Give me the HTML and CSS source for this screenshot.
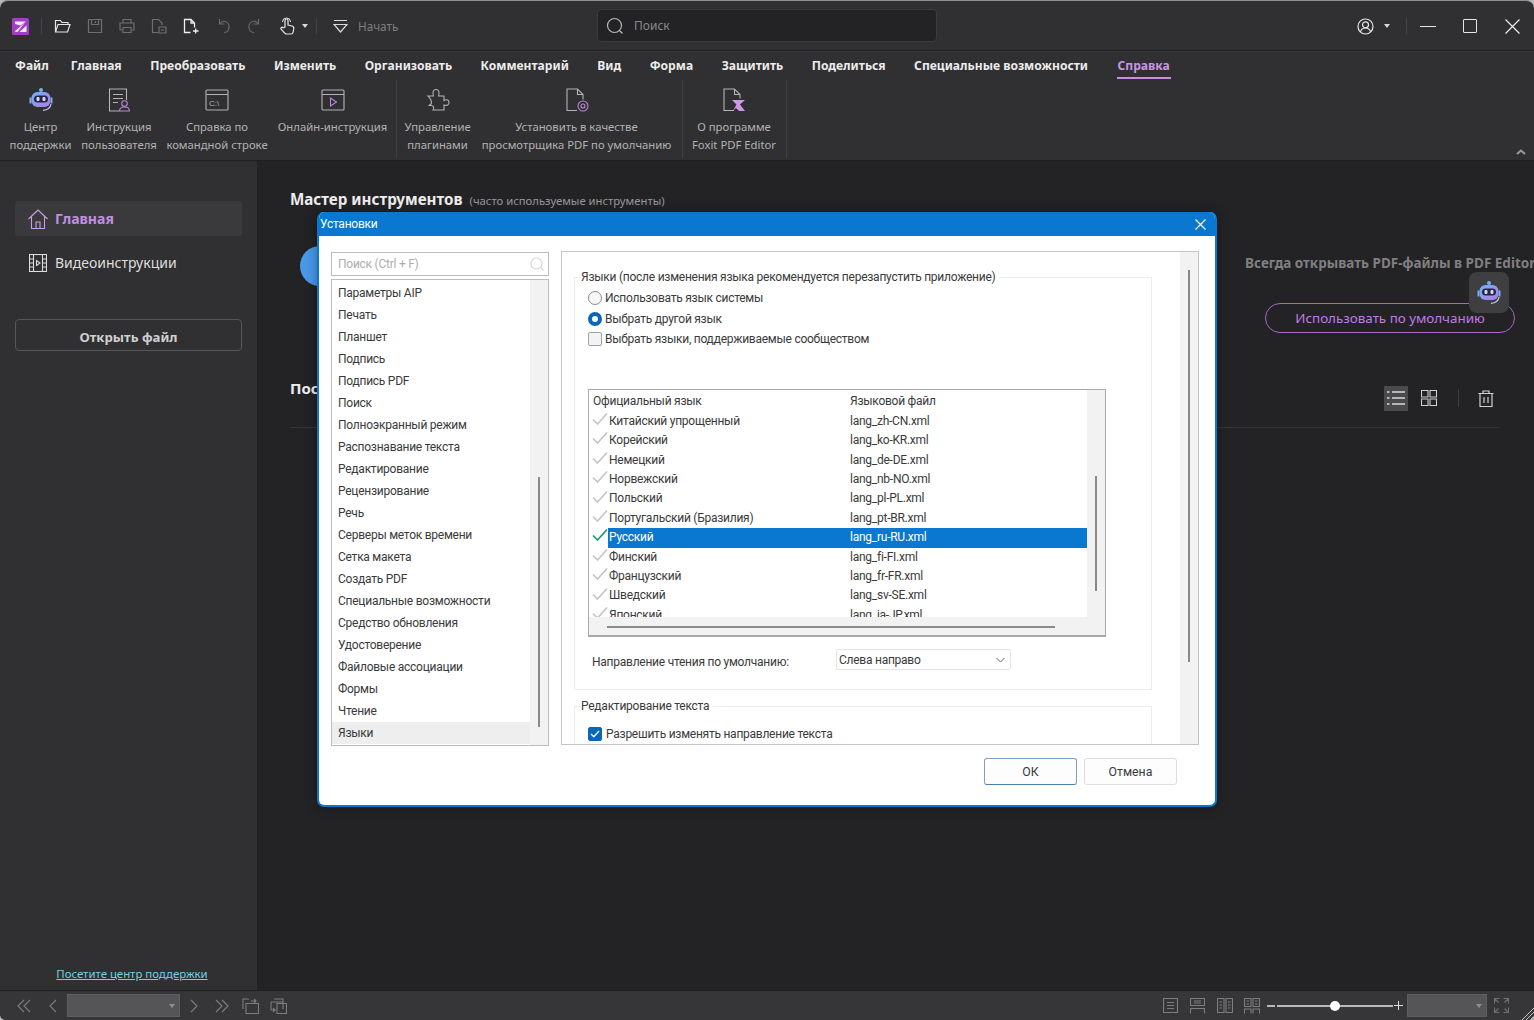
FILE: index.html
```html
<!DOCTYPE html>
<html lang="ru">
<head>
    <meta charset="UTF-8">
    <meta name="viewport" content="width=device-width, initial-scale=1.0">
    <title>Foxit PDF Editor</title>
    <link rel="stylesheet" href="styles.css">
</head>
<body>
<svg class="defs" width="0" height="0">
    <defs>
        <linearGradient id="robo" x1="0" y1="0" x2="1" y2="1">
            <stop offset="0" stop-color="#6fb4f5"/>
            <stop offset="1" stop-color="#b07ae8"/>
        </linearGradient>
        <symbol id="robot" viewBox="0 0 26 26">
            <circle cx="13" cy="3" r="2" fill="#6fb4f5"/>
            <path d="M1.500 10.500h2v6h-2zM22.500 10.500h2v6h-2z" fill="#6fb4f5"/>
            <rect x="3.500" y="5" width="19" height="15" rx="6" fill="url(#robo)"/>
            <rect x="6" y="8.500" width="14" height="7" rx="3.500" fill="#2a2440"/>
            <rect x="8.500" y="10" width="3" height="4" rx="1" fill="#cfd9ff"/>
            <rect x="14.500" y="10" width="3" height="4" rx="1" fill="#cfd9ff"/>
            <path d="M23 17c-.5 4-4 6-8 6.300" fill="none" stroke="#b9c3e8" stroke-width="1.300"/>
        </symbol>
        <symbol id="tick" viewBox="0 0 16 14">
            <path d="M1 7.500l4.500 4.500L15 1.500" fill="none" stroke="currentColor" stroke-width="1.700"/>
        </symbol>
    </defs>
</svg>

<div class="app">
    <header class="titlebar">
        <div class="qa">
            <svg class="logo" width="17" height="17" viewBox="0 0 17 17"><rect width="17" height="17" rx="1.500" fill="#a23fc0"/><path d="M3 3.500h11L8.500 7.500 3 6zM14.500 14H7.500l7-6.500zM2.500 13.500L13 4.500 5.500 14z" fill="#f4e6fa"/></svg>
            <span class="qa-sep"></span>
            <svg class="ic" width="17" height="16" viewBox="0 0 17 16" fill="none" stroke="#e6e6e6" stroke-width="1.200"><path d="M1.500 14V2.500h5l1.500 2h6v2"/><path d="M1.500 14l2.500-7.500h12L13.500 14z"/></svg>
            <svg class="ic" width="16" height="16" viewBox="0 0 16 16" fill="none" stroke="#6f6e70" stroke-width="1.200"><path d="M1.500 1.500h13v13h-13z"/><path d="M4.500 1.500v5h7v-5M8.500 3v2"/></svg>
            <svg class="ic" width="16" height="16" viewBox="0 0 16 16" fill="none" stroke="#6f6e70" stroke-width="1.200"><path d="M4 5V1.500h8V5M4 12H1V5h14v7h-3"/><path d="M4 9.500h8v5H4z"/></svg>
            <svg class="ic" width="16" height="16" viewBox="0 0 16 16" fill="none" stroke="#6f6e70" stroke-width="1.200"><path d="M7 14.500H1.500v-13h6l3.500 3.500v2"/><path d="M8 9h7v6H8zM10 12h3"/></svg>
            <svg class="ic" width="16" height="16" viewBox="0 0 16 16" fill="none" stroke="#efefef" stroke-width="1.300"><path d="M7.500 14.500h-6v-13h6.500l3.500 3.500v4.500M8 1.500V5h3.500"/><path d="M10 13h5.500M12.700 10.500v5"/></svg>
            <svg class="ic" width="16" height="16" viewBox="0 0 16 16" fill="none" stroke="#6a696b" stroke-width="1.200"><path d="M4.500 1v5h5M4.500 6C6 4 8 3 10 3.500c3 .7 4.500 3.500 4 6.500-.5 2.500-2.500 4.500-5 4.500"/></svg>
            <svg class="ic" width="16" height="16" viewBox="0 0 16 16" fill="none" stroke="#6a696b" stroke-width="1.200"><path d="M11.500 1v5h-5M11.500 6C10 4 8 3 6 3.500c-3 .7-4.500 3.500-4 6.500.5 2.500 2.500 4.500 5 4.500"/></svg>
            <svg class="ic" width="16" height="18" viewBox="0 0 16 18" fill="none" stroke="#e6e6e6" stroke-width="1.200"><path d="M6 10V3.500a1.500 1.500 0 013 0V8l4 1c1.300.4 2 1.300 1.800 2.500l-.6 3.500c-.2 1.200-1 2-2.300 2H7.500c-1 0-1.700-.5-2.300-1.300L2 12c-.7-1.300.9-2.400 2-1.300z"/><path d="M3.500 5a4 4 0 018 0" stroke-width="1"/></svg>
            <span class="caret"></span>
            <span class="qa-sep qa-sep-2"></span>
            <svg class="ic-start" width="15" height="15" viewBox="0 0 15 15" fill="none" stroke="#d8d8d8" stroke-width="1.200"><path d="M1 1.500h13M1 5.500h13L7.500 13z"/></svg>
            <span class="start-label">Начать</span>
        </div>
        <div class="search">
            <svg width="18" height="18" viewBox="0 0 18 18" fill="none" stroke="#b9b9b9" stroke-width="1.200"><circle cx="8.500" cy="8.500" r="7"/><path d="M13.500 13.500l3 3"/></svg>
            <span>Поиск</span>
        </div>
        <div class="win-btns">
            <svg width="17" height="17" viewBox="0 0 17 17" fill="none" stroke="#e6e6e6" stroke-width="1.200"><circle cx="8.500" cy="8.500" r="7.500"/><circle cx="8.500" cy="6.800" r="3"/><path d="M3.500 14c.5-3 2.500-4 5-4s4.500 1 5 4"/></svg>
            <span class="caret caret-user"></span>
            <span class="qa-sep qa-sep-3"></span>
            <span class="win-min"></span>
            <span class="win-max"></span>
            <svg class="win-close" width="15" height="15" viewBox="0 0 15 15" stroke="#efefef" stroke-width="1.200"><path d="M.5.500l14 14M14.500.500l-14 14"/></svg>
        </div>
    </header>

    <nav class="tabs">
        <a class="tab tab-first">Файл</a>
        <a class="tab">Главная</a>
        <a class="tab">Преобразовать</a>
        <a class="tab">Изменить</a>
        <a class="tab">Организовать</a>
        <a class="tab">Комментарий</a>
        <a class="tab">Вид</a>
        <a class="tab">Форма</a>
        <a class="tab">Защитить</a>
        <a class="tab">Поделиться</a>
        <a class="tab">Специальные возможности</a>
        <a class="tab tab-active">Справка</a>
    </nav>

    <section class="ribbon">
        <div class="rb-group">
            <div class="rb-item rb-w63">
                <svg class="rb-robot" width="26" height="26"><use href="#robot"/></svg>
                <span>Центр<br>поддержки</span>
            </div>
            <div class="rb-item rb-w74">
                <svg width="24" height="24" viewBox="0 0 24 24" fill="none" stroke="#b4b4b4" stroke-width="1.100"><path d="M12 23H2.500V1h17v11"/><path d="M6 6.500h10M6 10.500h10M6 14.500h5"/><circle cx="17.500" cy="15.500" r="2.800" stroke="#b58ad8"/><path d="M12.500 23c0-3 2-4 5-4s5 1 5 4z" stroke="#b58ad8"/></svg>
                <span>Инструкция<br>пользователя</span>
            </div>
            <div class="rb-item rb-w102">
                <svg width="24" height="24" viewBox="0 0 24 24" fill="none" stroke="#b4b4b4" stroke-width="1.100"><rect x="1" y="2" width="22" height="20" rx="1"/><path d="M1 6.500h22"/><text x="4" y="17.500" font-size="8" fill="#b4b4b4" stroke="none" font-family="Liberation Sans">C:\</text></svg>
                <span>Справка по<br>командной строке</span>
            </div>
            <div class="rb-item rb-w109">
                <svg width="24" height="24" viewBox="0 0 24 24" fill="none" stroke="#b4b4b4" stroke-width="1.100"><rect x="1" y="2" width="22" height="20" rx="1"/><path d="M1 6.500h22"/><path d="M9.500 10v8l6-4z" stroke="#b58ad8"/></svg>
                <span>Онлайн-инструкция</span>
            </div>
        </div>
        <div class="rb-group">
            <div class="rb-item rb-w65">
                <svg width="24" height="24" viewBox="0 0 24 24" fill="none" stroke="#b4b4b4" stroke-width="1.100"><path d="M2 8h5.500C6 4 7.500 1.500 10 1.500S14 4 12.500 8H18v4.500c3-1.500 5-.5 5 2s-2 3.500-5 2.500v5H7c1.500-2.500.5-4.500-2-4.500H2.500c2-.5 3-1.500 3-3S4 9.500 2 8z"/></svg>
                <span>Управление<br>плагинами</span>
            </div>
            <div class="rb-item rb-w193">
                <svg width="24" height="24" viewBox="0 0 24 24" fill="none" stroke="#b4b4b4" stroke-width="1.100"><path d="M12 22.500H2V1h10.500L18 6.500v5M12.500 1v5.500H18"/><circle cx="18" cy="18" r="5" stroke="#b58ad8"/><circle cx="18" cy="18" r="2" stroke="#b58ad8"/></svg>
                <span>Установить в качестве<br>просмотрщика PDF по умолчанию</span>
            </div>
        </div>
        <div class="rb-group">
            <div class="rb-item rb-w86">
                <svg width="24" height="24" viewBox="0 0 24 24" fill="none" stroke="#b4b4b4" stroke-width="1.100"><path d="M12 22.500H2V1h10.500L18 6.500v4M12.500 1v5.500H18"/><path d="M10 12h13l-5 4.500 5 6.500h-6l-3-3-3 2.500 3.500-6z" fill="#cf97e6" stroke="none"/></svg>
                <span>О программе<br>Foxit PDF Editor</span>
            </div>
        </div>
        <svg class="rb-collapse" width="10" height="6" viewBox="0 0 10 6" fill="none" stroke="#9a9a9a" stroke-width="2"><path d="M1 5l4-3.500L9 5"/></svg>
    </section>

    <div class="workspace">
        <aside class="sidebar">
            <div class="side-item side-active">
                <svg width="20" height="20" viewBox="0 0 20 20" fill="none" stroke="#c9a0e6" stroke-width="1.100"><path d="M.5 10L10 1l9.500 9M3.500 8v11.500h13V8"/><path d="M8 19.500V13h4v6.500"/></svg>
                <span>Главная</span>
            </div>
            <div class="side-item">
                <svg width="18" height="18" viewBox="0 0 18 18" fill="none" stroke="#dcdcdc" stroke-width="1.100"><rect x=".5" y=".5" width="17" height="17"/><path d="M4.500.5v17M13.500.5v17M.5 5h4M.5 9h4M.5 13h4M13.500 5h4M13.500 9h4M13.500 13h4"/><path d="M7.500 6.500v5l3.500-2.500z"/></svg>
                <span>Видеоинструкции</span>
            </div>
            <button class="open-file">Открыть файл</button>
            <a class="help-link">Посетите центр поддержки</a>
        </aside>

        <main class="main">
            <h2 class="main-title">Мастер инструментов <small>(часто используемые инструменты)</small></h2>
            <div class="promo">
                <span class="promo-circle"></span>
                <div class="promo-right">
                    <p class="promo-text">Всегда открывать PDF-файлы в PDF Editor</p>
                    <button class="promo-btn">Использовать по умолчанию</button>
                </div>
            </div>
            <div class="recent-head">
                <span class="recent-title">Последние</span>
                <span class="view-btn view-btn-on">
                    <svg width="18" height="16" viewBox="0 0 18 16" fill="none" stroke="#d9d9d9" stroke-width="1.400"><path d="M5 2h13M5 8h13M5 14h13M0 2h2.500M0 8h2.500M0 14h2.500"/></svg>
                </span>
                <span class="view-btn">
                    <svg width="16" height="16" viewBox="0 0 16 16" fill="none" stroke="#d0d0d0" stroke-width="1.100"><path d="M.5.500h6.500v6.500H.5zM9 .5h6.500v6.500H9zM.5 9h6.500v6.500H.5zM9 9h6.500v6.500H9z"/></svg>
                </span>
                <span class="view-sep"></span>
                <span class="view-btn">
                    <svg width="16" height="17" viewBox="0 0 16 17" fill="none" stroke="#d0d0d0" stroke-width="1.200"><path d="M.5 3.500h15M5 3.500V1h6v2.500M2 3.500v13h12v-13M6 7v6M10 7v6"/></svg>
                </span>
            </div>
        </main>

        <div class="robot-float">
            <svg width="26" height="26"><use href="#robot"/></svg>
        </div>

        <div class="dialog">
            <div class="dlg-title">
                <span>Установки</span>
                <svg width="11" height="11" viewBox="0 0 11 11" stroke="#fff" stroke-width="1.100"><path d="M.5.500l10 10M10.500.500l-10 10"/></svg>
            </div>
            <div class="dlg-body">
                <div class="dlg-left">
                    <div class="dlg-search">
                        <span>Поиск (Ctrl + F)</span>
                        <svg width="14" height="14" viewBox="0 0 14 14" fill="none" stroke="#d4d4d4" stroke-width="1.100"><circle cx="6.500" cy="6.500" r="5.500"/><path d="M10.500 10.500l3 3"/></svg>
                    </div>
                    <div class="cat-box">
                        <ul class="cat-list">
                            <li>Параметры AIP</li>
                            <li>Печать</li>
                            <li>Планшет</li>
                            <li>Подпись</li>
                            <li>Подпись PDF</li>
                            <li>Поиск</li>
                            <li>Полноэкранный режим</li>
                            <li>Распознавание текста</li>
                            <li>Редактирование</li>
                            <li>Рецензирование</li>
                            <li>Речь</li>
                            <li>Серверы меток времени</li>
                            <li>Сетка макета</li>
                            <li>Создать PDF</li>
                            <li>Специальные возможности</li>
                            <li>Средство обновления</li>
                            <li>Удостоверение</li>
                            <li>Файловые ассоциации</li>
                            <li>Формы</li>
                            <li>Чтение</li>
                            <li class="cat-on">Языки</li>
                        </ul>
                        <div class="vscroll cat-scroll"><i></i></div>
                    </div>
                </div>

                <div class="dlg-panel">
                    <div class="panel-content">
                        <fieldset class="fset fset-lang">
                            <legend>Языки (после изменения языка рекомендуется перезапустить приложение)</legend>
                            <label class="opt"><span class="radio"></span>Использовать язык системы</label>
                            <label class="opt"><span class="radio radio-on"></span>Выбрать другой язык</label>
                            <label class="opt"><span class="check"></span>Выбрать языки, поддерживаемые сообществом</label>

                            <div class="lang-box">
                                <div class="lang-list">
                                    <div class="lang-row lang-head"><span>Официальный язык</span><span>Языковой файл</span></div>
                                    <div class="lang-row"><svg width="16" height="14"><use href="#tick"/></svg><span>Китайский упрощенный</span><span>lang_zh-CN.xml</span></div>
                                    <div class="lang-row"><svg width="16" height="14"><use href="#tick"/></svg><span>Корейский</span><span>lang_ko-KR.xml</span></div>
                                    <div class="lang-row"><svg width="16" height="14"><use href="#tick"/></svg><span>Немецкий</span><span>lang_de-DE.xml</span></div>
                                    <div class="lang-row"><svg width="16" height="14"><use href="#tick"/></svg><span>Норвежский</span><span>lang_nb-NO.xml</span></div>
                                    <div class="lang-row"><svg width="16" height="14"><use href="#tick"/></svg><span>Польский</span><span>lang_pl-PL.xml</span></div>
                                    <div class="lang-row"><svg width="16" height="14"><use href="#tick"/></svg><span>Португальский (Бразилия)</span><span>lang_pt-BR.xml</span></div>
                                    <div class="lang-row lang-on"><svg width="16" height="14"><use href="#tick"/></svg><span>Русский</span><span>lang_ru-RU.xml</span></div>
                                    <div class="lang-row"><svg width="16" height="14"><use href="#tick"/></svg><span>Финский</span><span>lang_fi-FI.xml</span></div>
                                    <div class="lang-row"><svg width="16" height="14"><use href="#tick"/></svg><span>Французский</span><span>lang_fr-FR.xml</span></div>
                                    <div class="lang-row"><svg width="16" height="14"><use href="#tick"/></svg><span>Шведский</span><span>lang_sv-SE.xml</span></div>
                                    <div class="lang-row"><svg width="16" height="14"><use href="#tick"/></svg><span>Японский</span><span>lang_ja-JP.xml</span></div>
                                </div>
                                <div class="vscroll lang-vs"><i></i></div>
                                <div class="hscroll"><i></i></div>
                                <div class="corner"></div>
                            </div>

                            <div class="dir-row">
                                <span>Направление чтения по умолчанию:</span>
                                <div class="select">
                                    <span>Слева направо</span>
                                    <svg width="9" height="6" viewBox="0 0 9 6" fill="none" stroke="#666" stroke-width="1"><path d="M.5 1l4 4 4-4"/></svg>
                                </div>
                            </div>
                        </fieldset>

                        <fieldset class="fset fset-edit">
                            <legend>Редактирование текста</legend>
                            <label class="opt"><span class="check check-on"><svg width="10" height="8" viewBox="0 0 10 8" fill="none" stroke="#fff" stroke-width="1.300"><path d="M1 4l2.800 2.800L9 1"/></svg></span>Разрешить изменять направление текста</label>
                        </fieldset>
                    </div>
                    <div class="vscroll panel-vs"><i></i></div>
                </div>
            </div>
            <div class="dlg-foot">
                <button class="btn btn-def">ОК</button>
                <button class="btn">Отмена</button>
            </div>
        </div>
    </div>

    <footer class="statusbar">
        <span class="st-slot"><svg width="14" height="14" viewBox="0 0 14 14" fill="none" stroke="#7d7c7e" stroke-width="1.100"><path d="M7 1L1 7l6 6M13 1L7 7l6 6"/></svg></span>
        <span class="st-slot"><svg width="9" height="14" viewBox="0 0 9 14" fill="none" stroke="#7d7c7e" stroke-width="1.100"><path d="M8 1L2 7l6 6"/></svg></span>
        <div class="st-combo st-combo-page"><span class="caret caret-dim"></span></div>
        <span class="st-slot"><svg width="9" height="14" viewBox="0 0 9 14" fill="none" stroke="#7d7c7e" stroke-width="1.100"><path d="M1 1l6 6-6 6"/></svg></span>
        <span class="st-slot"><svg width="14" height="14" viewBox="0 0 14 14" fill="none" stroke="#7d7c7e" stroke-width="1.100"><path d="M1 1l6 6-6 6M7 1l6 6-6 6"/></svg></span>
        <span class="st-slot"><svg width="17" height="16" viewBox="0 0 17 16" fill="none" stroke="#7d7c7e" stroke-width="1.100"><path d="M4 5.500h12.500v10H4zM1 11V1h6M9 3h5M12 1l2 2-2 2"/></svg></span>
        <span class="st-slot"><svg width="17" height="16" viewBox="0 0 17 16" fill="none" stroke="#7d7c7e" stroke-width="1.100"><path d="M4 1h9v10M1 4h12M7 5.500h9.500v10H7zM1 4v8h5M3 10l2 2-2 2"/></svg></span>

        <div class="st-right">
            <span class="st-slot st-slot-r"><svg width="15" height="15" viewBox="0 0 15 15" fill="none" stroke="#7d7c7e" stroke-width="1.100"><path d="M.5.500h14v14H.5zM4 4.500h7M4 7.500h7M4 10.500h7"/></svg></span>
            <span class="st-slot st-slot-r"><svg width="15" height="16" viewBox="0 0 15 16" fill="none" stroke="#7d7c7e" stroke-width="1.100"><path d="M.5.500h14v7H.5zM4 3h7M4 5h7M.5 15.500v-5h14v5"/></svg></span>
            <span class="st-slot st-slot-r"><svg width="16" height="15" viewBox="0 0 16 15" fill="none" stroke="#7d7c7e" stroke-width="1.100"><path d="M.5.500h6.500v14H.5zM9 .5h6.500v14H9zM2.500 4h2.500M2.500 7h2.500M2.500 10h2.500M11 4h2.500M11 7h2.500M11 10h2.500"/></svg></span>
            <span class="st-slot st-slot-r"><svg width="16" height="16" viewBox="0 0 16 16" fill="none" stroke="#7d7c7e" stroke-width="1.100"><path d="M.5.500h6.500v8H.5zM9 .5h6.500v8H9zM.5 15.500v-4.500h6.500v4.500M9 15.500v-4.500h6.500v4.500M2.500 3h2.500M2.500 6h2.500M11 3h2.500M11 6h2.500"/></svg></span>
            <div class="zoom">
                <span class="zoom-minus"></span>
                <div class="zoom-track"><span class="zoom-knob"></span></div>
                <span class="zoom-plus"></span>
            </div>
            <div class="st-combo st-combo-zoom"><span class="caret caret-dim"></span></div>
            <span class="st-slot"><svg width="15" height="15" viewBox="0 0 15 15" fill="none" stroke="#6f6e70" stroke-width="1.200"><path d="M5.500.5h-5v5M9.500.5h5v5M5.500 14.500h-5v-5M9.500 14.500h5v-5M.5.500l4 4M14.500.500l-4 4M.5 14.500l4-4M14.500 14.500l-4-4"/></svg></span>
        </div>
        <svg class="grip" width="12" height="12" viewBox="0 0 12 12" stroke="#c8c8c8" stroke-width="1"><path d="M12 0L0 12M12 4l-8 8M12 8l-4 4"/></svg>
    </footer>
</div>
</body>
</html>
```

FILE: styles.css
```css
* {
    margin: 0;
    padding: 0;
    box-sizing: border-box;
}
html, body {
    height: 100%;
    overflow: hidden;
    background: #b8b8b8;
}
body {
    font-family: "Noto Sans", "Open Sans", sans-serif;
}
.defs {
    position: absolute;
}
button {
    font-family: inherit;
}
.app {
    height: 100vh;
    display: flex;
    flex-direction: column;
    background: #302f31;
    border-top: 1px solid #8f8f8f;
    border-radius: 8px 8px 6px 6px;
    overflow: hidden;
}

/* title bar */
.titlebar {
    flex: 0 0 50px;
    display: grid;
    grid-template-columns: 1fr 340px 1fr;
    align-items: center;
    border-bottom: 1px solid #1f1e20;
    padding-top: 1px;
}
.qa {
    display: flex;
    align-items: center;
    padding-left: 12px;
}
.logo {
    margin-right: 12px;
}
.qa .ic {
    margin-left: 16px;
    flex: none;
}
.qa .qa-sep + .ic {
    margin-left: 12px;
}
.qa-sep {
    width: 1px;
    height: 16px;
    background: #454446;
}
.qa-sep-2 {
    margin-left: 8px;
}
.qa-sep-3 {
    margin-left: 16px;
    margin-right: 13px;
}
.caret {
    width: 0;
    height: 0;
    border-left: 3.500px solid transparent;
    border-right: 3.500px solid transparent;
    border-top: 4px solid #d8d8d8;
    margin-left: 7px;
}
.ic-start {
    margin-left: 16px;
}
.start-label {
    margin-left: 10px;
    font-size: 11.700px;
    color: #7e7d7f;
}
.search {
    height: 33px;
    margin-top: -1px;
    display: flex;
    align-items: center;
    gap: 10px;
    padding-left: 8px;
    background: #232224;
    border: 1px solid #3c3b3d;
    border-radius: 4px;
    font-size: 12px;
    color: #8b8a8c;
}
.win-btns {
    display: flex;
    align-items: center;
    justify-content: flex-end;
    padding-right: 14px;
}
.caret-user {
    margin-left: 10px;
}
.win-min {
    width: 16px;
    height: 1px;
    background: #e6e6e6;
}
.win-max {
    width: 14px;
    height: 14px;
    margin-left: 27px;
    border: 1px solid #e6e6e6;
    border-radius: 1px;
}
.win-close {
    margin-left: 28px;
}

/* tabs + ribbon */
.tabs {
    flex: 0 0 29px;
    display: flex;
    gap: 28.500px;
    padding: 5px 0 0 15px;
    border-top: 1px solid #38373a;
}
.tab {
    font-size: 12.100px;
    font-weight: 700;
    color: #ececec;
    line-height: 18px;
    height: 22px;
}
.tab-first {
    margin-right: -6.500px;
}
.tab-active {
    color: #c796e0;
    border-bottom: 2px solid #c98de2;
    padding: 0 1px;
}
.ribbon {
    flex: 0 0 81px;
    display: flex;
    border-bottom: 1px solid #1f1e20;
    position: relative;
}
.rb-group {
    display: flex;
    gap: 10px;
    padding: 0 9px 3px;
    height: 78px;
    border-right: 1px solid #3f3e40;
}
.rb-group + .rb-group {
    padding-left: 8px;
}
.rb-item {
    display: flex;
    flex-direction: column;
    align-items: center;
    text-align: center;
    font-size: 11.300px;
    line-height: 18px;
    color: #b3b2b4;
    white-space: nowrap;
    padding-top: 8px;
}
.rb-w63 { width: 63px; }
.rb-w65 { width: 65px; }
.rb-w74 { width: 74px; }
.rb-w86 { width: 86px; }
.rb-w102 { width: 102px; }
.rb-w109 { width: 109px; }
.rb-w193 { width: 193px; }
.rb-item svg {
    flex: none;
    margin-bottom: 6px;
}
.rb-item .rb-robot {
    margin: -1px 0 5px;
}
.rb-collapse {
    position: absolute;
    right: 8px;
    bottom: 5px;
}

/* workspace */
.workspace {
    flex: 1;
    display: flex;
    position: relative;
    min-height: 0;
    background: #232224;
}
.sidebar {
    flex: 0 0 257px;
    display: flex;
    flex-direction: column;
    padding: 40px 15px 9px;
    background: #302f31;
    border-right: 1px solid #212022;
}
.side-item {
    width: 227px;
    height: 35px;
    display: flex;
    align-items: center;
    gap: 8px;
    padding-left: 14px;
    font-size: 14px;
    color: #dedede;
    margin-bottom: 9px;
}
.side-active {
    gap: 7px;
    padding-left: 13px;
    background: #3a393b;
    border-radius: 3px;
    color: #c08fe0;
    font-weight: 700;
}
.open-file {
    width: 227px;
    height: 32px;
    margin-top: 30px;
    padding-top: 3px;
    background: transparent;
    border: 1px solid #565557;
    border-radius: 4px;
    color: #d0d0d0;
    font-size: 13.200px;
    font-weight: 700;
}
.help-link {
    margin-top: auto;
    padding-left: 7px;
    text-align: center;
    font-size: 11.400px;
    color: #72cfe6;
    text-decoration: underline;
}
.main {
    flex: 1;
    min-width: 0;
    overflow: hidden;
    padding: 28px 34px 0 32px;
}
.main-title {
    font-size: 15.200px;
    font-weight: 700;
    color: #ededed;
    line-height: 21px;
}
.main-title small {
    font-size: 11.300px;
    font-weight: 400;
    color: #9a999b;
    margin-left: 3px;
}
.promo {
    display: flex;
    justify-content: space-between;
    height: 168px;
}
.promo-circle {
    flex: none;
    width: 40px;
    height: 40px;
    margin: 35px 0 0 10px;
    border-radius: 50%;
    background: #4a98e8;
}
.promo-right {
    width: 255px;
    padding-top: 42px;
}
.promo-text {
    font-size: 13.500px;
    font-weight: 700;
    color: #807f81;
    line-height: 20px;
    white-space: nowrap;
}
.promo-btn {
    display: block;
    width: 250px;
    height: 30px;
    margin: 30px 0 0 20px;
    background: transparent;
    border: 1px solid #a868c8;
    border-radius: 15px;
    color: #c27ae8;
    font-size: 13.400px;
}
.recent-head {
    display: flex;
    align-items: center;
    height: 49px;
    border-bottom: 1px solid #353436;
    padding-bottom: 10px;
}
.recent-title {
    font-size: 15px;
    font-weight: 700;
    color: #ededed;
    margin-right: auto;
    margin-top: -20px;
}
.view-btn {
    width: 24px;
    height: 25px;
    display: flex;
    align-items: center;
    justify-content: center;
    margin-left: 9px;
}
.view-btn-on {
    background: #4a494b;
}
.view-sep {
    width: 1px;
    height: 18px;
    margin-left: 17px;
    margin-right: 11px;
    background: #3e3d3f;
}
.view-btn:last-child {
    margin-right: 2px;
    margin-left: 4px;
}
.robot-float {
    position: absolute;
    left: 1469px;
    top: 111px;
    width: 40px;
    height: 41px;
    display: flex;
    align-items: center;
    justify-content: center;
    background: #3f3e40;
    border-radius: 8px;
}

/* settings dialog */
.dialog {
    position: absolute;
    left: 317px;
    top: 51px;
    width: 900px;
    height: 595px;
    display: flex;
    flex-direction: column;
    background: #fff;
    border: 2px solid #0a78d0;
    border-top: 0;
    border-radius: 7px;
    color: #3a3a3a;
    font-family: Roboto, "Noto Sans", sans-serif;
    font-size: 12px;
    letter-spacing: -0.25px;
    overflow: hidden;
    box-shadow: 0 0 12px rgba(0, 0, 0, .35);
}
.dlg-title {
    flex: 0 0 24px;
    display: flex;
    align-items: center;
    justify-content: space-between;
    padding: 0 11px 0 3px;
    margin: 0 -2px;
    background: #0a78d0;
    color: #fff;
}
.dlg-body {
    display: flex;
    gap: 12px;
    padding: 15px 16px 0 12px;
}
.dlg-left {
    width: 218px;
    display: flex;
    flex-direction: column;
    gap: 3px;
    padding-top: 1px;
}
.dlg-search {
    height: 24px;
    display: flex;
    align-items: center;
    justify-content: space-between;
    padding: 0 4px 0 6px;
    border: 1px solid #bdbdbd;
    color: #adadad;
}
.cat-box {
    display: flex;
    height: 467px;
    border: 1px solid #bdbdbd;
}
.cat-list {
    flex: 1;
    list-style: none;
    padding-top: 1.500px;
}
.cat-list li {
    height: 22.050px;
    line-height: 22px;
    padding-left: 6px;
}
.cat-on {
    background: #eeeeee;
}
.vscroll {
    flex: 0 0 18px;
    display: flex;
    justify-content: center;
    background: #f2f2f2;
}
.vscroll i {
    display: block;
    width: 2px;
    background: #8a8a8a;
}
.cat-scroll i {
    height: 250px;
    margin-top: 197px;
}
.dlg-panel {
    width: 638px;
    height: 494px;
    display: flex;
    border: 1px solid #c4c4c4;
    overflow: hidden;
}
.panel-content {
    flex: 1;
    min-width: 0;
    padding: 16px 0 0 12px;
}
.panel-vs i {
    height: 392px;
    margin-top: 18px;
}
.fset {
    width: 578px;
    border: 1px solid #ededed;
    padding: 0 0 0 13px;
}
.fset legend {
    margin-left: -7px;
    padding-right: 4px;
    line-height: 18px;
}
.fset-lang {
    height: 422px;
}
.fset-edit {
    margin-top: 7px;
    height: 60px;
}
.opt {
    display: flex;
    align-items: center;
    gap: 3px;
    height: 20px;
}
.fset-lang .opt:first-of-type {
    margin-top: 2px;
}
.fset-lang .opt:nth-of-type(2) {
    margin-top: 1px;
}
.radio {
    width: 14px;
    height: 14px;
    border: 1px solid #8c8c8c;
    border-radius: 50%;
    background: #f7f7f7;
}
.radio-on {
    border: 4px solid #0a67b8;
    background: #fff;
}
.check {
    width: 14px;
    height: 14px;
    border: 1px solid #a0a0a0;
    border-radius: 2px;
    background: #f3f3f3;
    display: flex;
    align-items: center;
    justify-content: center;
}
.check-on {
    background: #0a67b8;
    border-color: #0a67b8;
}
.fset-edit .opt {
    margin-top: 9px;
    gap: 4px;
}
.lang-box {
    width: 518px;
    height: 248px;
    margin-top: 40px;
    display: grid;
    grid-template-columns: 1fr 18px;
    grid-template-rows: 1fr 18px;
    border: 1px solid #a9a9a9;
    border-bottom-width: 2px;
}
.lang-list {
    overflow: hidden;
    min-width: 0;
    padding-top: 1px;
}
.lang-row {
    height: 19.400px;
    display: flex;
    align-items: center;
    position: relative;
    color: #3a3a3a;
    white-space: nowrap;
}
.lang-head {
    height: 20.800px;
    padding-left: 4px;
}
.lang-head span:first-child {
    width: 257px;
}
.lang-row svg {
    flex: none;
    margin: -5px 0 0 3px;
    color: #c6c6c6;
}
.lang-row svg + span {
    width: 241px;
    padding-left: 1px;
    align-self: stretch;
    line-height: 19px;
}
.lang-row svg + span + span {
    flex: 1;
    align-self: stretch;
    line-height: 19px;
    padding-left: 1px;
}
.lang-on span {
    background: #0a78d0;
    color: #fff;
}
.lang-on svg {
    color: #1d9a6c;
}
.lang-vs i {
    height: 115px;
    margin-top: 86px;
}
.hscroll {
    background: #f2f2f2;
    padding: 9px 32px 0 18px;
}
.hscroll i {
    display: block;
    height: 2px;
    background: #8a8a8a;
}
.corner {
    background: #f2f2f2;
}
.dir-row {
    display: flex;
    align-items: center;
    height: 24px;
    margin-top: 12px;
}
.dir-row > span {
    width: 248px;
    padding: 2px 0 0 4px;
}
.select {
    width: 175px;
    height: 21px;
    display: flex;
    align-items: center;
    justify-content: space-between;
    padding: 0 5px 0 2px;
    border: 1px solid #e4e4e4;
    border-radius: 2px;
    margin-top: -3px;
}
.dlg-foot {
    display: flex;
    justify-content: flex-end;
    gap: 7px;
    padding: 12px 38px 0 0;
}
.btn {
    width: 93px;
    height: 27px;
    background: #fdfdfd;
    border: 1px solid #dedede;
    border-radius: 3px;
    color: #3a3a3a;
    font-family: inherit;
    font-size: 12.300px;
}
.btn-def {
    border: 1px solid #7f9fc0;
    border-bottom-color: #4f7fae;
}

/* status bar */
.statusbar {
    flex: 0 0 30px;
    display: flex;
    align-items: center;
    padding-left: 10px;
    background: #363537;
    border-top: 1px solid #1f1e20;
    position: relative;
}
.st-slot {
    flex: 0 0 28px;
    display: flex;
    align-items: center;
    justify-content: center;
}
.st-slot-r {
    flex-basis: 27px;
}
.st-combo {
    height: 23px;
    display: flex;
    align-items: center;
    justify-content: flex-end;
    padding-right: 4px;
    background: #555456;
    border: 1px solid #5e5d5f;
}
.st-combo-page {
    width: 113px;
    margin-left: 1px;
}
.st-combo-zoom {
    width: 80px;
    margin-left: 4px;
}
.caret-dim {
    border-top-color: #8f8e90;
}
.st-right {
    margin-left: auto;
    display: flex;
    align-items: center;
    padding-right: 19px;
}
.zoom {
    width: 136px;
    display: flex;
    align-items: center;
    margin-left: 2px;
}
.zoom-minus {
    width: 8px;
    height: 2px;
    margin-right: 2px;
    background: #b8b8b8;
}
.zoom-track {
    flex: 1;
    height: 2px;
    background: #b8b8b8;
    position: relative;
}
.zoom-knob {
    position: absolute;
    left: 53px;
    top: -4px;
    width: 10px;
    height: 10px;
    border-radius: 50%;
    background: #fff;
}
.zoom-plus {
    width: 9px;
    height: 9px;
    margin-left: 1px;
    background:
        linear-gradient(#dcdcdc, #dcdcdc) center / 100% 1px no-repeat,
        linear-gradient(#dcdcdc, #dcdcdc) center / 1px 100% no-repeat;
}
.grip {
    position: absolute;
    right: 0;
    bottom: 0;
}
```
